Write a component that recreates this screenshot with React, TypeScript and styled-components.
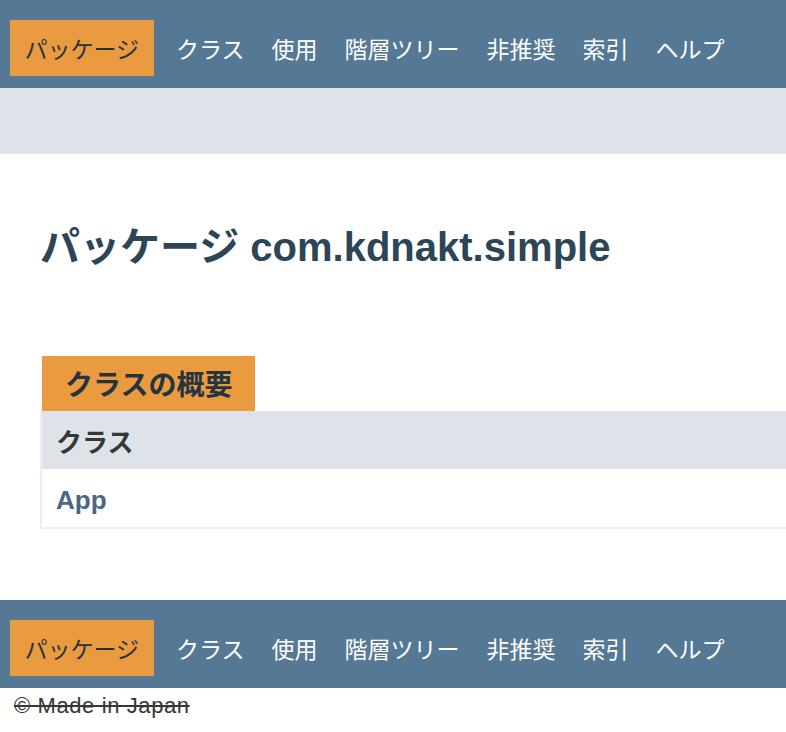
import styled, { createGlobalStyle } from "styled-components";

const GlobalStyle = createGlobalStyle`
  body {
    margin: 0;
    background: #ffffff;
    font-family: "Liberation Sans", "Noto Sans CJK JP", sans-serif;
    color: #353833;
  }
`;

const navItems = ["パッケージ", "クラス", "使用", "階層ツリー", "非推奨", "索引", "ヘルプ"];

const NavBar = () => (
  <TopNav>
    {navItems.map((item, i) => (
      <NavItem key={item} $active={i === 0}>
        {item}
      </NavItem>
    ))}
  </TopNav>
);

const App = () => {
  return (
    <>
      <GlobalStyle />
      <header>
        <NavBar />
        <SubNav />
      </header>

      <Main>
        <Title>パッケージ com.kdnakt.simple</Title>

        <Summary>
          <Caption>クラスの概要</Caption>
          <Table>
            <thead>
              <tr>
                <HeadCell>クラス</HeadCell>
              </tr>
            </thead>
            <tbody>
              <tr>
                <Cell>
                  <ClassLink href="#">App</ClassLink>
                </Cell>
              </tr>
            </tbody>
          </Table>
        </Summary>
      </Main>

      <footer>
        <NavBar />
        <Legal>© Made in Japan</Legal>
      </footer>
    </>
  );
};

export default App;

const TopNav = styled.nav`
  display: flex;
  align-items: center;
  height: 88px;
  box-sizing: border-box;
  padding: 20px 10px 12px;
  background: #557994;
  font-family: "Noto Sans CJK JP", sans-serif;
  font-size: 23px;
`;

const NavItem = styled.a<{ $active?: boolean }>`
  display: block;
  height: 56px;
  line-height: 56px;
  padding: ${(p) => (p.$active ? "0 14.5px" : "0 13.5px")};
  margin-right: ${(p) => (p.$active ? "9px" : "0")};
  background: ${(p) => (p.$active ? "#ea9a3f" : "transparent")};
  color: ${(p) => (p.$active ? "#253441" : "#ffffff")};
  white-space: nowrap;
  cursor: pointer;
`;

const SubNav = styled.div`
  height: 66px;
  background: #dee3e9;
`;

const Main = styled.main`
  padding: 69px 0 71px 40px;
`;

const Title = styled.h1`
  margin: 0;
  font-size: 40px;
  line-height: 48px;
  font-weight: bold;
  color: #2c4557;
`;

const Summary = styled.section`
  margin-top: 85px;
`;

const Caption = styled.div`
  display: inline-block;
  margin-left: 2px;
  height: 55px;
  line-height: 55px;
  padding: 0 23px;
  background: #ea9a3f;
  color: #253441;
  font-family: "Noto Sans CJK JP", sans-serif;
  font-size: 28px;
  font-weight: bold;
  vertical-align: bottom;
`;

const Table = styled.table`
  width: 100%;
  border-collapse: collapse;
  border-left: 2px solid #eeeeee;
  border-bottom: 2px solid #eeeeee;
`;

const HeadCell = styled.th`
  height: 58px;
  padding: 0 14px;
  text-align: left;
  background: #dee3e9;
  color: #353833;
  font-family: "Noto Sans CJK JP", sans-serif;
  font-size: 26px;
  font-weight: bold;
`;

const Cell = styled.td`
  height: 54px;
  padding: 4px 14px 0;
  background: #ffffff;
`;

const ClassLink = styled.a`
  color: #4a6782;
  font-size: 26px;
  font-weight: bold;
  text-decoration: none;
`;

const Legal = styled.p`
  margin: 0;
  padding: 6px 14px;
  line-height: 24px;
  font-size: 22px;
  letter-spacing: 0.6px;
  color: #353833;
  text-decoration: line-through;
`;
